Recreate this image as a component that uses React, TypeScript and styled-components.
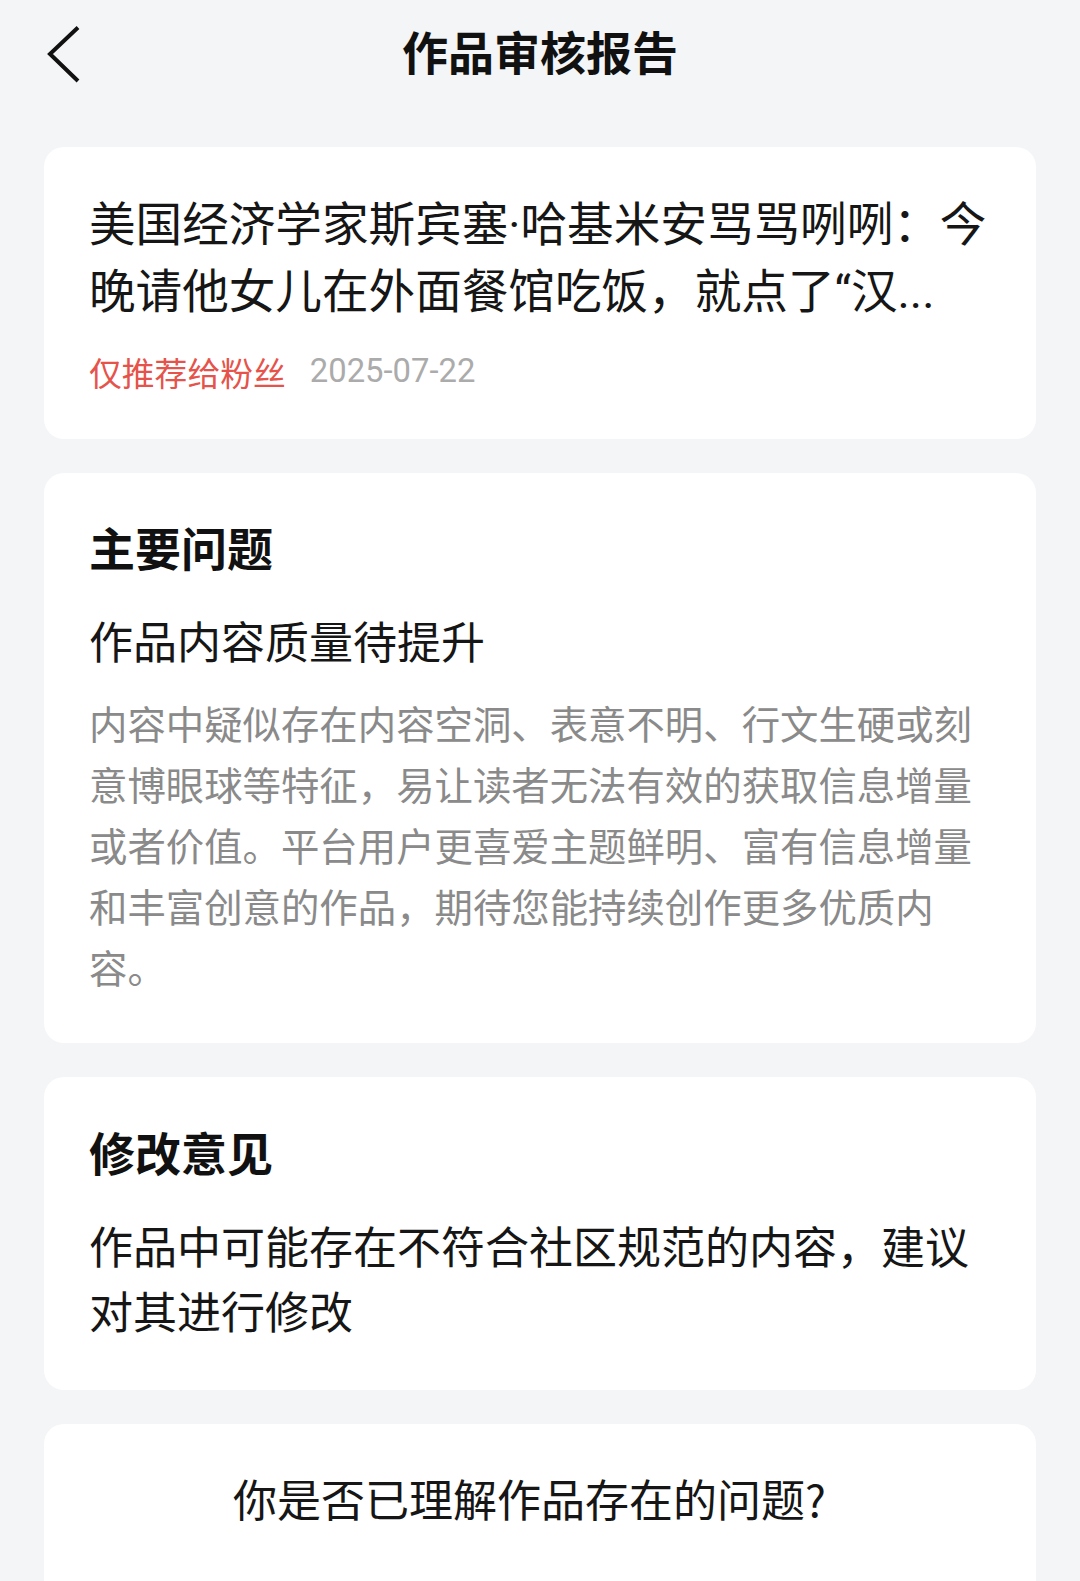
import React from "react";
import styled, { createGlobalStyle } from "styled-components";

const GlobalStyle = createGlobalStyle`
  html, body { margin: 0; padding: 0; background: #f4f5f7; }
  body {
    font-family: "Noto Sans CJK SC", "Noto Sans", sans-serif;
    -webkit-font-smoothing: antialiased;
  }
  * { box-sizing: border-box; }
`;

const Page = styled.div`
  height: 1581px;
  overflow: hidden;
  background: #f4f5f7;
`;

const Header = styled.header`
  height: 105px;
  display: grid;
  grid-template-columns: 1fr auto 1fr;
  align-items: center;
`;

const BackButton = styled.button`
  justify-self: start;
  display: flex;
  align-items: center;
  padding: 0 0 0 47px;
  margin: 0;
  border: none;
  background: transparent;
  cursor: pointer;
`;

const HeaderTitle = styled.h1`
  margin: 0 0 6px;
  font-size: 46px;
  line-height: 60px;
  font-weight: 700;
  color: #111;
  letter-spacing: 0;
`;

const CardList = styled.main`
  display: flex;
  flex-direction: column;
  gap: 34px;
  padding: 42px 44px 0;
`;

const Card = styled.section<{ $pt: number; $pb: number; $center?: boolean }>`
  background: #fff;
  border-radius: 20px;
  padding: ${(p) => p.$pt}px 30px ${(p) => p.$pb}px 45px;
  display: flex;
  flex-direction: column;
  align-items: ${(p) => (p.$center ? "center" : "stretch")};
`;

const ArticleTitle = styled.h2`
  margin: 0;
  font-size: 46.6px;
  line-height: 67px;
  font-weight: 400;
  color: #161616;
`;

const TitleLine = styled.span`
  display: block;
  white-space: nowrap;
`;

const Narrow = styled.span`
  font-family: Roboto, "Noto Sans", sans-serif;
  line-height: 0;
`;

const MetaRow = styled.div`
  margin-top: 28px;
  display: flex;
  align-items: center;
  gap: 24px;
  height: 44px;
`;

const Tag = styled.span`
  font-size: 32.8px;
  color: #e5534b;
`;

const DateText = styled.span`
  font-family: Roboto, "Noto Sans", sans-serif;
  font-size: 32.8px;
  color: #ababab;
`;

const SectionHeading = styled.h3`
  margin: 0;
  font-size: 46px;
  line-height: 60px;
  font-weight: 700;
  color: #111;
`;

const SubHeading = styled.div<{ $mt: number; $lh: number }>`
  margin-top: ${(p) => p.$mt}px;
  font-size: 44px;
  line-height: ${(p) => p.$lh}px;
  color: #161616;
`;

const BodyText = styled.p`
  margin: 22px 0 0;
  font-size: 38.4px;
  line-height: 61px;
  color: #8a8a8a;
`;

const BodyLine = styled.span`
  display: block;
  white-space: nowrap;
`;

const Question = styled.div`
  font-size: 44px;
  line-height: 60px;
  color: #161616;
  min-height: 150px;
  margin-right: 36px;
`;

const bodyLines = [
  "内容中疑似存在内容空洞、表意不明、行文生硬或刻",
  "意博眼球等特征，易让读者无法有效的获取信息增量",
  "或者价值。平台用户更喜爱主题鲜明、富有信息增量",
  "和丰富创意的作品，期待您能持续创作更多优质内",
  "容。",
];

const ChevronLeft = () => (
  <svg width="34" height="60" viewBox="0 0 34 60" fill="none">
    <polyline
      points="31,4.5 3,31 31,58"
      stroke="#111"
      strokeWidth="4"
      strokeLinecap="butt"
      strokeLinejoin="miter"
    />
  </svg>
);

export default function App() {
  return (
    <>
      <GlobalStyle />
      <Page>
        <Header>
          <BackButton aria-label="返回">
            <ChevronLeft />
          </BackButton>
          <HeaderTitle>作品审核报告</HeaderTitle>
          <span />
        </Header>
        <CardList>
          <Card $pt={40} $pb={46}>
            <ArticleTitle>
              <TitleLine>
                美国经济学家斯宾塞<Narrow>·</Narrow>哈基米安骂骂咧咧：今
              </TitleLine>
              <TitleLine>
                晚请他女儿在外面餐馆吃饭，就点了<Narrow>“</Narrow>汉<Narrow>...</Narrow>
              </TitleLine>
            </ArticleTitle>
            <MetaRow>
              <Tag>仅推荐给粉丝</Tag>
              <DateText>2025-07-22</DateText>
            </MetaRow>
          </Card>

          <Card $pt={43} $pb={46}>
            <SectionHeading>主要问题</SectionHeading>
            <SubHeading $mt={34} $lh={60}>作品内容质量待提升</SubHeading>
            <BodyText>
              {bodyLines.map((l) => (
                <BodyLine key={l}>{l}</BodyLine>
              ))}
            </BodyText>
          </Card>

          <Card $pt={44} $pb={47}>
            <SectionHeading>修改意见</SectionHeading>
            <SubHeading $mt={32} $lh={65}>
              作品中可能存在不符合社区规范的内容，建议对其进行修改
            </SubHeading>
          </Card>

          <Card $pt={44} $pb={40} $center>
            <Question>你是否已理解作品存在的问题?</Question>
          </Card>
        </CardList>
      </Page>
    </>
  );
}
